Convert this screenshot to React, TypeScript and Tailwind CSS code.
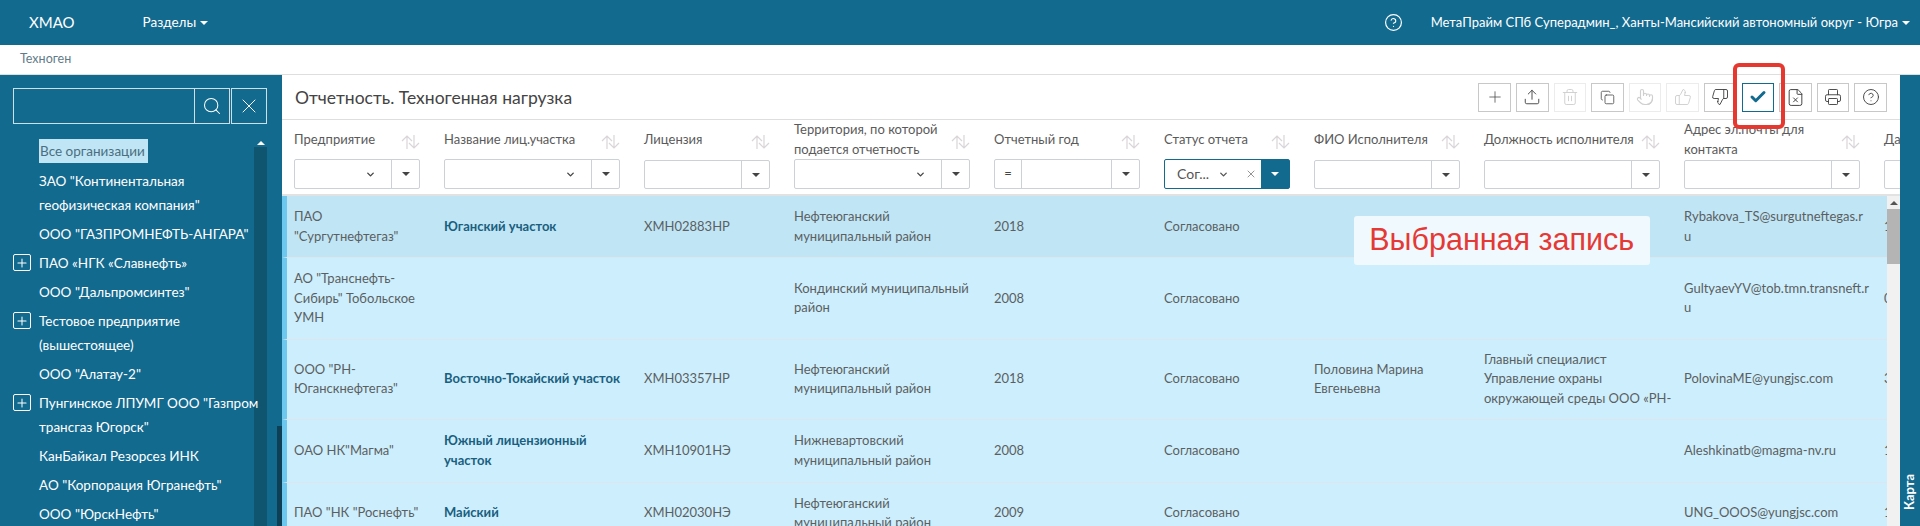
import { Check, CircleHelp, Copy, FileX, Plus, Pointer, Printer, Search, ThumbsDown, ThumbsUp, Trash2, Upload, X, ChevronDown } from "lucide-react";
import type { ReactNode } from "react";

type FilterKind = "plain" | "combo" | "num" | "active";

interface Column {
	title: string;
	width: string;
	filter: FilterKind;
}

const COLUMNS: Column[] = [
	{ title: "Предприятие", width: "w-[150px]", filter: "combo" },
	{ title: "Название лиц.участка", width: "w-[200px]", filter: "combo" },
	{ title: "Лицензия", width: "w-[150px]", filter: "plain" },
	{ title: "Территория, по которой\nподается отчетность", width: "w-[200px]", filter: "combo" },
	{ title: "Отчетный год", width: "w-[170px]", filter: "num" },
	{ title: "Статус отчета", width: "w-[150px]", filter: "active" },
	{ title: "ФИО Исполнителя", width: "w-[170px]", filter: "plain" },
	{ title: "Должность исполнителя", width: "w-[200px]", filter: "plain" },
	{ title: "Адрес эл.почты для\nконтакта", width: "w-[200px]", filter: "plain" },
	{ title: "Дата", width: "w-[200px]", filter: "plain" },
];

const ROWS = [
	{
		height: "h-[62px]",
		selected: true,
		cells: ['ПАО\n"Сургутнефтегаз"', "Юганский участок", "ХМН02883НР", "Нефтеюганский\nмуниципальный район", "2018", "Согласовано", "", "", "Rybakova_TS@surgutneftegas.r\nu", "17.04.2019"],
	},
	{
		height: "h-[81.5px]",
		cells: ['АО "Транснефть-\nСибирь" Тобольское\nУМН', "", "", "Кондинский муниципальный\nрайон", "2008", "Согласовано", "", "", "GultyaevYV@tob.tmn.transneft.r\nu", "01.03.2019"],
	},
	{
		height: "h-[80px]",
		cells: ['ООО "РН-\nЮганскнефтегаз"', "Восточно-Токайский участок", "ХМН03357НР", "Нефтеюганский\nмуниципальный район", "2018", "Согласовано", "Половина Марина\nЕвгеньевна", "Главный специалист\nУправление охраны\nокружающей среды ООО «РН-", "PolovinaME@yungjsc.com", "31.03.2019"],
	},
	{
		height: "h-[63px]",
		cells: ['ОАО НК"Магма"', "Южный лицензионный\nучасток", "ХМН10901НЭ", "Нижневартовский\nмуниципальный район", "2008", "Согласовано", "", "", "Aleshkinatb@magma-nv.ru", "10.04.2019"],
	},
	{
		height: "h-[62px]",
		cells: ['ПАО "НК "Роснефть"', "Майский", "ХМН02030НЭ", "Нефтеюганский\nмуниципальный район", "2009", "Согласовано", "", "", "UNG_OOOS@yungjsc.com", "12.04.2019"],
	},
];

const ORGS: { name: string; expandable?: boolean }[] = [
	{ name: 'ЗАО "Континентальная\nгеофизическая компания"' },
	{ name: 'ООО "ГАЗПРОМНЕФТЬ-АНГАРА"' },
	{ name: "ПАО «НГК «Славнефть»", expandable: true },
	{ name: 'ООО "Дальпромсинтез"' },
	{ name: "Тестовое предприятие\n(вышестоящее)", expandable: true },
	{ name: 'ООО "Алатау-2"' },
	{ name: 'Пунгинское ЛПУМГ ООО "Газпром\nтрансгаз Югорск"', expandable: true },
	{ name: "КанБайкал Резорсез ИНК" },
	{ name: 'АО "Корпорация Югранефть"' },
	{ name: 'ООО "ЮрскНефть"' },
];

function Caret({ className }: { className?: string }) {
	return <span className={`inline-block w-0 h-0 border-x-[4px] border-x-transparent border-t-[4px] border-t-current ${className ?? ""}`} />;
}

function SortIcon() {
	return (
		<svg width="19" height="14" viewBox="0 0 19 14" fill="none" stroke="#d9d5d8" strokeWidth="1.2" className="shrink-0 mt-[5px]">
			<path d="M6 14V1M1 6l5-5 5 5" />
			<path d="M13 0v13M8 8l5 5 5-5" />
		</svg>
	);
}

function ColumnFilter({ kind }: { kind: FilterKind }) {
	if (kind === "active") {
		return (
			<div className="flex h-[30px] w-[126px] border border-[#136a8f] rounded-[2px] text-[#555]">
				<div className="flex-1 flex items-center pl-3 text-[14px]">
					<span className="w-[32px] whitespace-nowrap">Сог...</span>
					<ChevronDown size={11} strokeWidth={3} className="ml-[9px]" />
					<X size={12} strokeWidth={1.25} className="ml-[16px]" />
				</div>
				<div className="w-[28px] bg-[#136a8f] flex items-center justify-center text-white">
					<Caret />
				</div>
			</div>
		);
	}
	const height = kind === "plain" ? "h-[29px] mt-px" : "h-[30px]";
	return (
		<div className={`flex ${height} w-full border border-[#ccd1d6] rounded-[2px] text-[#444]`}>
			{kind === "num" && <div className="w-[27px] border-r border-[#ccd1d6] flex items-center justify-center text-[13px]">=</div>}
			<div className="flex-1 flex items-center justify-end pr-[15px]">
				{kind === "combo" && <ChevronDown size={11} strokeWidth={3} />}
			</div>
			<div className="w-[28px] border-l border-[#ccd1d6] flex items-center justify-center">
				<Caret />
			</div>
		</div>
	);
}

function ToolButton({ children, disabled, active, overlay }: { children: ReactNode; disabled?: boolean; active?: boolean; overlay?: ReactNode }) {
	const tone = active
		? "border-[#136a8f] text-[#136a8f]"
		: disabled
			? "border-[#ececec] text-[#cfcfcf]"
			: "border-[#c8c8c8] text-[#444]";
	return (
		<div className={`relative w-[32.6px] h-[29px] border flex items-center justify-center ${tone}`}>
			{children}
			{overlay}
		</div>
	);
}

function Sidebar() {
	return (
		<aside className="relative w-[282px] shrink-0 bg-[#136a8f] pl-[13px] pt-[13px] overflow-hidden text-white text-[13.5px] leading-[24px]">
			<div className="flex w-[253.5px] h-[36px] gap-[1px]">
				<div className="flex flex-1 border border-[#cfdfe7]">
					<div className="flex-1" />
					<div className="w-[35px] border-l border-[#cfdfe7] flex items-center justify-center">
						<Search size={20} strokeWidth={1.25} />
					</div>
				</div>
				<div className="w-[36px] border border-[#cfdfe7] flex items-center justify-center">
					<X size={24} strokeWidth={1} />
				</div>
			</div>
			<div className="flex mt-[15px] h-[400px]">
				<ul className="w-[241px] shrink-0 flex flex-col gap-[5px]">
					<li className="pl-[26px] mb-[1px]">
						<span className="inline-block bg-[#c0e5f5] text-[#4b6f80] px-[1px] w-[109px] whitespace-nowrap">Все организации</span>
					</li>
					{ORGS.map((org) => (
						<li key={org.name} className="relative pl-[26px] whitespace-pre">
							{org.expandable && (
								<span className="absolute left-0 top-[3px] w-[18px] h-[17px] border-[1.5px] border-white rounded-[2px] flex items-center justify-center">
									<Plus size={14} strokeWidth={1.75} />
								</span>
							)}
							{org.name}
						</li>
					))}
				</ul>
				<div className="w-[13px] shrink-0 flex flex-col">
					<div className="h-[8px] flex items-center justify-center text-white">
						<span className="w-0 h-0 border-x-[4px] border-x-transparent border-b-[4px] border-b-white" />
					</div>
					<div className="flex-1 bg-[#0f5570]" />
				</div>
			</div>
			<div className="absolute right-0 top-[351px] bottom-0 w-[5px] bg-[#0e3f55]" />
		</aside>
	);
}

function TableHeader() {
	return (
		<div className="flex h-[76px] shrink-0 pl-3 border-b-2 border-[#e2e2e2] text-[13px] leading-[19.5px] text-[#5a5a5a] overflow-hidden">
			{COLUMNS.map((col) => (
				<div key={col.title} className={`${col.width} shrink-0 pr-[24px]`}>
					<div className="flex items-center h-[39px]">
						<span className="flex-1 whitespace-pre">{col.title}</span>
						<SortIcon />
					</div>
					<ColumnFilter kind={col.filter} />
				</div>
			))}
		</div>
	);
}

function TableBody() {
	return (
		<div className="relative flex flex-1 min-h-0">
			<div className="flex-1 min-w-0 overflow-hidden text-[13px] leading-[19.5px] text-[#5b5f62]">
				{ROWS.map((row) => (
					<div
						key={row.cells[0]}
						className={`flex items-center ${row.height} border-b border-[#dbe6ef] border-l-[5px] pl-[7px] ${row.selected ? "bg-[#c0e5f5] border-l-[#6cc8ee]" : "bg-[#cdeefc] border-l-[#6cc8ee]"}`}
					>
						{row.cells.map((cell, i) => (
							<div
								key={i}
								className={`${COLUMNS[i].width} shrink-0 pr-[16px] whitespace-pre ${i === 1 ? "font-bold text-[#1a5f80]" : ""}`}
							>
								{cell}
							</div>
						))}
					</div>
				))}
			</div>
			<div className="w-[13px] shrink-0 flex flex-col bg-[#f1f1f1]">
				<div className="h-[13px] flex items-center justify-center">
					<span className="w-0 h-0 border-x-[4px] border-x-transparent border-b-[4px] border-b-[#555]" />
				</div>
				<div className="h-[55px] bg-[#b4b4b4]" />
			</div>
			<div className="absolute left-[1071.5px] top-[19.5px] w-[296.5px] h-[49px] rounded-[3px] bg-[#eff9fe] flex items-center justify-center text-[#e53935] text-[30.5px] font-['Liberation_Sans',Arial,sans-serif]">
				Выбранная запись
			</div>
		</div>
	);
}

export default function App() {
	return (
		<div className="h-[526px] overflow-hidden flex flex-col bg-white font-['Lato',sans-serif]">
			<header className="h-[45px] shrink-0 bg-[#136a8f] text-white text-[13.5px] flex items-center">
				<span className="ml-[29px] text-[15px]">ХМАО</span>
				<span className="ml-[68px] flex items-center gap-[4px]">
					Разделы <Caret />
				</span>
				<div className="ml-auto flex items-center">
					<CircleHelp size={19} strokeWidth={1.5} />
					<span className="ml-[28px] text-[13px]">МетаПрайм СПб Суперадмин_, Ханты-Мансийский автономный округ - Югра</span>
					<Caret className="ml-[4px] mr-[10px]" />
				</div>
			</header>
			<div className="h-[30px] shrink-0 border-b border-[#dedede] pl-[20px] text-[12.5px] text-[#5f7b8a] flex items-center">Техноген</div>
			<div className="flex flex-1 min-h-0">
				<Sidebar />
				<main className="flex-1 min-w-0 flex flex-col">
					<div className="h-[45px] shrink-0 border-b border-[#dedede] pl-[13px] pr-[13px] flex items-center justify-between">
						<h1 className="text-[17.5px] text-[#444] pt-[2px]">Отчетность. Техногенная нагрузка</h1>
						<div className="flex gap-[5px]">
							<ToolButton><Plus size={18} strokeWidth={1} /></ToolButton>
							<ToolButton><Upload size={18} strokeWidth={1.25} /></ToolButton>
							<ToolButton disabled><Trash2 size={18} strokeWidth={1.25} /></ToolButton>
							<ToolButton><Copy size={15} strokeWidth={1.25} /></ToolButton>
							<ToolButton disabled><Pointer size={18} strokeWidth={1.5} /></ToolButton>
							<ToolButton disabled><ThumbsUp size={18} strokeWidth={1.25} /></ToolButton>
							<ToolButton><ThumbsDown size={18} strokeWidth={1.25} /></ToolButton>
							<ToolButton
								active
								overlay={<div className="absolute left-[-10px] right-[-12px] top-[-21px] bottom-[-18px] z-10 border-[4px] border-[#e6382f] rounded-[6px]" />}
							>
								<Check size={18} strokeWidth={4} />
							</ToolButton>
							<ToolButton><FileX size={19} strokeWidth={1.25} /></ToolButton>
							<ToolButton><Printer size={18} strokeWidth={1.25} /></ToolButton>
							<ToolButton><CircleHelp size={18} strokeWidth={1.25} /></ToolButton>
						</div>
					</div>
					<TableHeader />
					<TableBody />
				</main>
				<div className="w-[20px] shrink-0 bg-[#136a8f] relative">
					<span className="absolute left-1/2 top-[417px] -translate-x-1/2 -translate-y-1/2 -rotate-90 text-white text-[13px] font-bold">Карта</span>
				</div>
			</div>
		</div>
	);
}
